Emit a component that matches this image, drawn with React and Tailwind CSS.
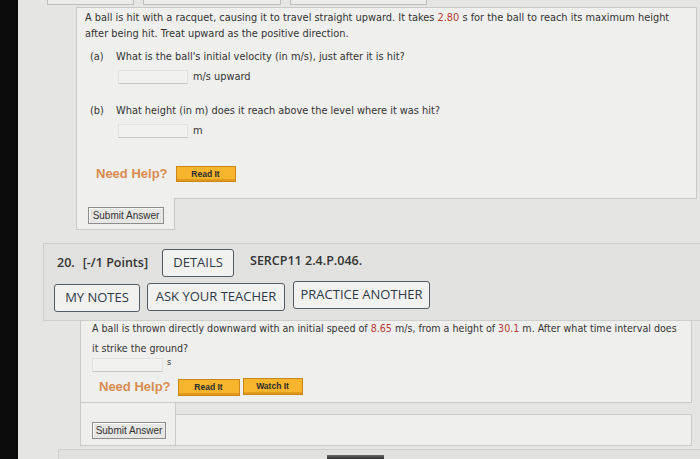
export default function App() {
  const body = "font-['DejaVu_Sans_Condensed','DejaVu_Sans',sans-serif]";
  const open = "font-['Open_Sans',sans-serif]";
  const arial = "font-['Liberation_Sans',Arial,sans-serif]";
  const red = "text-[#b43b3b]";
  const navBtn =
    "h-[28px] flex items-center justify-center border-[1.5px] border-[#555b62] rounded-[3px] bg-[#f1f1ef] text-[13px] text-[#2f3a48] " +
    open;
  const yellowBtn =
    "h-[16px] flex items-center justify-center border border-[#c98619] bg-[#f6b52c] text-[8.5px] font-bold text-[#2b2b2b] shadow-[inset_0_-2px_0_#e29a1c] " +
    arial;
  const submitBtn =
    "h-[17px] flex items-center justify-center border border-[#8d8d8d] bg-[#e6e6e4] text-[10px] text-[#333] shadow-[inset_1px_1px_0_#fafafa] " +
    arial;
  const input = "h-[14px] border border-[#e2e2e0] border-b-[#c6c6c4] bg-[#f1f1ef]";

  return (
    <div className="w-[700px] h-[459px] overflow-hidden flex bg-[#e5e5e3]">
      <div className="w-[18px] shrink-0 bg-[#0c0c0c]" />
      <div className="flex-1 flex flex-col min-w-0">
        {/* top strip: bottoms of previous row */}
        <div className="h-[7px] flex gap-[9px] pl-[29px]">
          <div className="w-[87px] h-[5px] border border-t-0 border-[#bdbdbb] bg-[#ececea]" />
          <div className="w-[138px] h-[5px] border border-t-0 border-[#bdbdbb] bg-[#ececea]" />
          <div className="w-[137px] h-[5px] border border-t-0 border-[#bdbdbb] bg-[#ececea]" />
        </div>

        {/* Question 19 card */}
        <div
          className={
            "ml-[58px] mr-[3px] h-[191px] bg-[#efefed] border-l border-t border-r border-[#c9c9c7] pl-[8px] pt-[2px] text-[10.9px] leading-[16px] text-[#333] whitespace-nowrap " +
            body
          }
        >
          <p>
            A ball is hit with a racquet, causing it to travel straight upward. It takes{" "}
            <span className={red}>2.80</span> s for the ball to reach its maximum height
            <br />
            after being hit. Treat upward as the positive direction.
          </p>
          <div className="mt-[7px] ml-[5px] flex">
            <span className="w-[26px]">(a)</span>
            <span>What is the ball's initial velocity (in m/s), just after it is hit?</span>
          </div>
          <div className="mt-[4px] ml-[33px] flex items-center">
            <div className={"w-[70px] " + input} />
            <span className="ml-[5px]">m/s upward</span>
          </div>
          <div className="mt-[18px] ml-[5px] flex">
            <span className="w-[26px]">(b)</span>
            <span>What height (in m) does it reach above the level where it was hit?</span>
          </div>
          <div className="mt-[4px] ml-[33px] flex items-center">
            <div className={"w-[70px] " + input} />
            <span className="ml-[5px]">m</span>
          </div>
          <div className="mt-[27px] ml-[11px] flex items-center gap-[8px]">
            <span className={"text-[13px] leading-[16px] font-bold text-[#d88b4d] " + arial}>Need Help?</span>
            <div className={"w-[60px] " + yellowBtn}>Read It</div>
          </div>
        </div>
        <div className="ml-[58px] mr-[3px] flex">
          <div className="w-[99px] h-[32px] shrink-0 bg-[#efefed] border-l border-r border-b border-[#c9c9c7] pl-[11px] pt-[9px]">
            <div className={"w-[76px] " + submitBtn}>Submit Answer</div>
          </div>
          <div className="flex-1 border-t border-[#c9c9c7]" />
        </div>

        {/* Question 20 header */}
        <div className="mt-[13px] ml-[25px] h-[78px] bg-[#e1e1df] border-l border-t border-b border-[#cececc] pt-[5px]">
          <div className="pl-[13px] flex items-center">
            <span className={"text-[12.5px] font-semibold text-[#333] " + open}>
              20.<span className="ml-[8px]">[-/1 Points]</span>
            </span>
            <div className={"ml-[14px] w-[72px] " + navBtn}>DETAILS</div>
            <span className={"ml-[16px] -mt-[3px] text-[12.5px] font-semibold text-[#333] " + open}>
              SERCP11 2.4.P.046.
            </span>
          </div>
          <div className="mt-[7px] pl-[10px] flex items-center">
            <div className={"w-[86px] " + navBtn}>MY NOTES</div>
            <div className={"ml-[7px] -mt-[3px] w-[138px] " + navBtn}>ASK YOUR TEACHER</div>
            <div className={"ml-[8px] -mt-[6px] w-[137px] " + navBtn}>PRACTICE ANOTHER</div>
          </div>
        </div>

        {/* Question 20 card */}
        <div
          className={
            "ml-[62px] mr-[8px] h-[82px] bg-[#efefed] border-l border-r border-b border-[#c9c9c7] pl-[11px] text-[10.6px] leading-[20px] text-[#333] whitespace-nowrap " +
            body
          }
        >
          <p className="-mt-[3px]">
            A ball is thrown directly downward with an initial speed of <span className={red}>8.65</span> m/s, from a
            height of <span className={red}>30.1</span> m. After what time interval does
            <br />
            it strike the ground?
          </p>
          <div className="flex items-center">
            <div className={"w-[71px] " + input} />
            <span className="ml-[4px] -mt-[6px] text-[9px]">s</span>
          </div>
          <div className="mt-[6px] ml-[7px] flex items-center">
            <span className={"text-[13px] leading-[18px] font-bold text-[#d88b4d] " + arial}>Need Help?</span>
            <div className={"ml-[7px] w-[62px] h-[17px] " + yellowBtn}>Read It</div>
            <div className={"ml-[3px] -mt-[2px] w-[60px] h-[17px] " + yellowBtn}>Watch It</div>
          </div>
        </div>
        <div className="ml-[62px] mr-[8px] flex">
          <div className="w-[96px] h-[43px] shrink-0 bg-[#efefed] border-l border-r border-b border-[#c9c9c7] pl-[11px] pt-[19px]">
            <div className={"w-[74px] h-[17px] " + submitBtn}>Submit Answer</div>
          </div>
          <div className="flex-1 mt-[11px] h-[32px] bg-[#efefed] border-t border-r border-b border-[#c9c9c7]" />
        </div>

        {/* next question edge */}
        <div className="mt-[3px] ml-[40px] flex-1 bg-[#e1e1df] border-t border-l border-[#cececc] flex items-end pl-[268px]">
          <div className="w-[57px] h-[4px] bg-gradient-to-b from-[#6b6b6b] to-[#2e2e2e]" />
        </div>
      </div>
    </div>
  );
}
